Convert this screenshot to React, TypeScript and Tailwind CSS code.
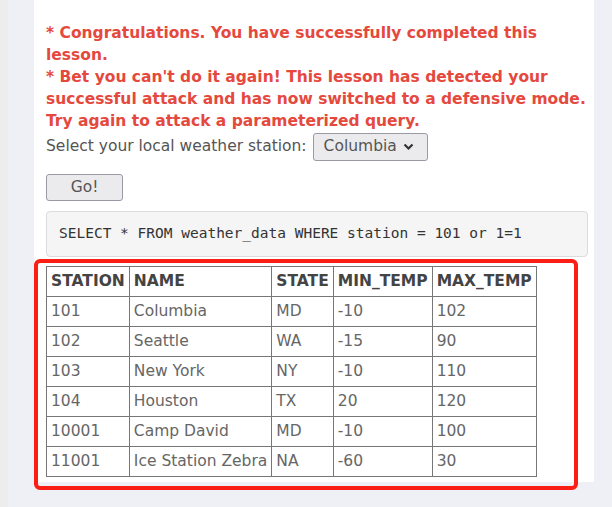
import React from "react";

const rows = [
  ["101", "Columbia", "MD", "-10", "102"],
  ["102", "Seattle", "WA", "-15", "90"],
  ["103", "New York", "NY", "-10", "110"],
  ["104", "Houston", "TX", "20", "120"],
  ["10001", "Camp David", "MD", "-10", "100"],
  ["11001", "Ice Station Zebra", "NA", "-60", "30"],
];

const headers = ["STATION", "NAME", "STATE", "MIN_TEMP", "MAX_TEMP"];

const App = () => {
  return (
    <div className="flex h-[507px] w-[612px] overflow-hidden bg-[#eef0f5] font-['DejaVu_Sans',sans-serif]">
      <div className="w-[8px] bg-[#ededed]" />
      <div className="ml-[26px] h-[482px] w-[560px] bg-white pl-[12px] pr-[6px] pt-[22px]">
        <div className="text-[15.5px] font-bold leading-[22px] text-[#e5493d]">
          <div>* Congratulations. You have successfully completed this lesson.</div>
          <div>
            * Bet you can't do it again! This lesson has detected your successful attack and has now switched to a
            defensive mode. Try again to attack a parameterized query.
          </div>
        </div>

        <div className="mt-[1px] flex h-[28px] items-center text-[15.5px] text-[#555]">
          <span>Select your local weather station:</span>
          <div className="ml-[6px] flex h-[28px] w-[115px] items-center rounded-[3px] border border-[#9a9aa6] bg-[#ebebee] pl-[10px]">
            <span>Columbia</span>
            <svg className="ml-[6px]" width="11" height="8" viewBox="0 0 11 8">
              <path d="M1.5 1.5 L5.5 5.5 L9.5 1.5" fill="none" stroke="#333" strokeWidth="2.2" />
            </svg>
          </div>
        </div>

        <button className="mt-[13px] h-[27px] w-[77px] rounded-[3px] border border-[#9a9aa6] bg-[#ebebee] text-[15.5px] text-[#555]">
          Go!
        </button>

        <div className="mt-[10px] flex h-[46px] w-[542px] items-center rounded-[4px] border border-[#dcdcdc] bg-[#f5f5f5] pl-[12px] font-['DejaVu_Sans_Mono',monospace] text-[14.5px] text-[#333]">
          SELECT * FROM weather_data WHERE station = 101 or 1=1
        </div>

        <div className="-ml-[12px] mt-[2px] w-[544px] rounded-[6px] border-[4px] border-[#fa1e14] pb-[9px] pl-[8px] pt-[3px]">
          <table className="border-collapse text-[15.5px]">
            <thead>
              <tr>
                {headers.map((h) => (
                  <th key={h} className="h-[30px] border border-[#777] px-[4px] text-left font-bold text-[#444]">
                    {h}
                  </th>
                ))}
              </tr>
            </thead>
            <tbody>
              {rows.map((r) => (
                <tr key={r[0]}>
                  {r.map((c, i) => (
                    <td key={i} className="h-[30px] border border-[#777] px-[4px] text-[#666]">
                      {c}
                    </td>
                  ))}
                </tr>
              ))}
            </tbody>
          </table>
        </div>
      </div>
    </div>
  );
};

export default App;
